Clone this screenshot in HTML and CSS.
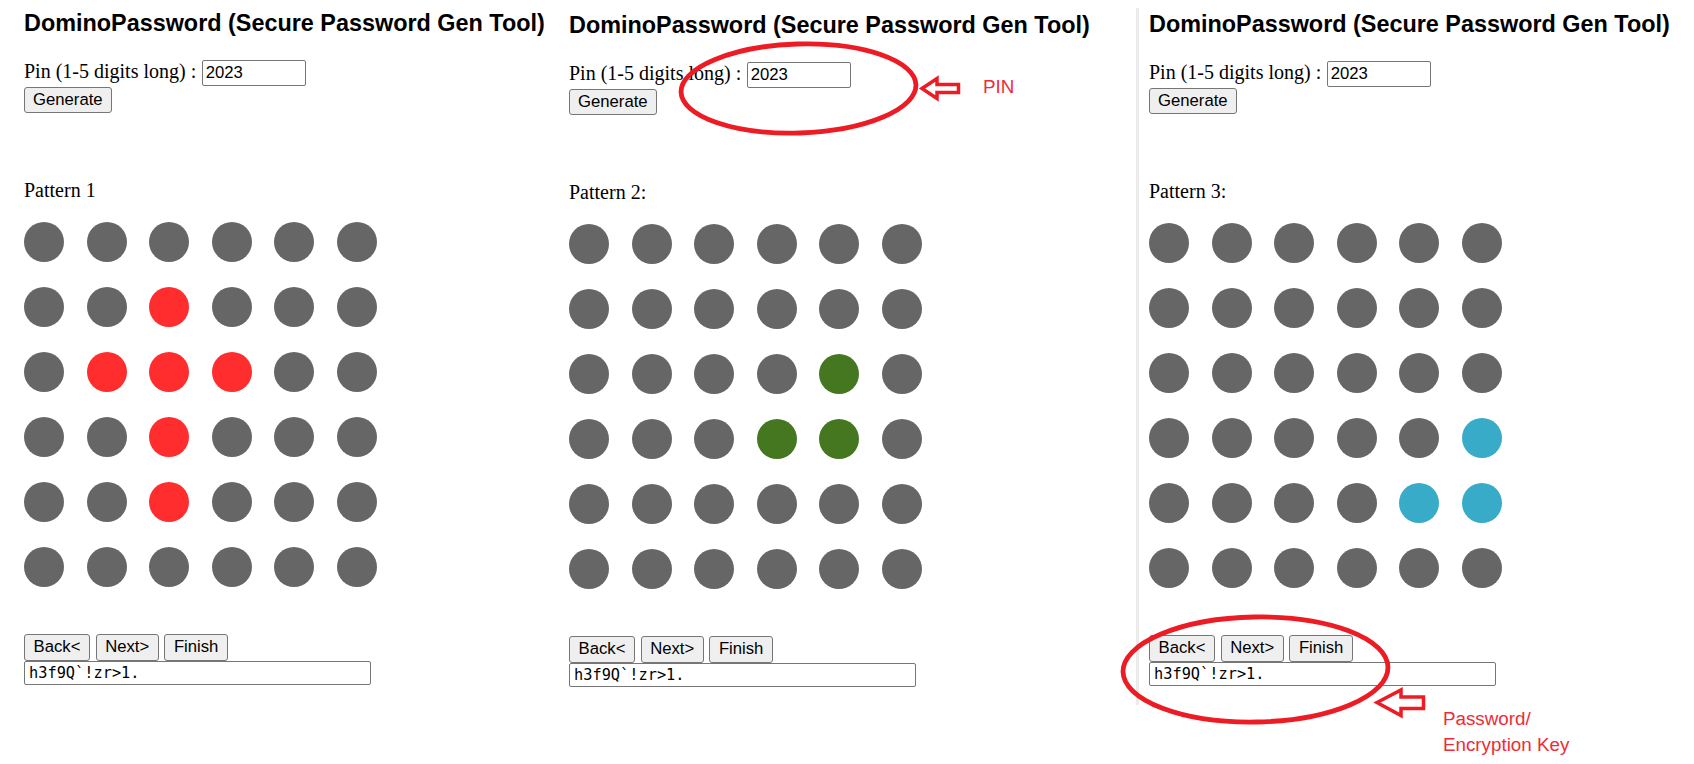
FILE: index.html
```html
<!DOCTYPE html>
<html lang="en">
<head>
<meta charset="utf-8">
<title>DominoPassword</title>
<link rel="stylesheet" href="styles.css">
</head>
<body>
<div class="sheet">
  <section class="panel panel--one">
    <h3 class="title">DominoPassword (Secure Password Gen Tool)</h3>
    <div class="pin-row"><label class="pin-label">Pin (1-5 digits long) :</label><input class="pin-input" type="text" value="2023"></div>
    <button class="btn btn--generate">Generate</button>
    <p class="pattern-label">Pattern 1</p>
    <div class="grid">
      <span class="dot"></span><span class="dot"></span><span class="dot"></span><span class="dot"></span><span class="dot"></span><span class="dot"></span>
      <span class="dot"></span><span class="dot"></span><span class="dot dot--red"></span><span class="dot"></span><span class="dot"></span><span class="dot"></span>
      <span class="dot"></span><span class="dot dot--red"></span><span class="dot dot--red"></span><span class="dot dot--red"></span><span class="dot"></span><span class="dot"></span>
      <span class="dot"></span><span class="dot"></span><span class="dot dot--red"></span><span class="dot"></span><span class="dot"></span><span class="dot"></span>
      <span class="dot"></span><span class="dot"></span><span class="dot dot--red"></span><span class="dot"></span><span class="dot"></span><span class="dot"></span>
      <span class="dot"></span><span class="dot"></span><span class="dot"></span><span class="dot"></span><span class="dot"></span><span class="dot"></span>
    </div>
    <div class="nav"><button class="btn btn--nav">Back&lt;</button><button class="btn btn--nav">Next&gt;</button><button class="btn btn--nav">Finish</button></div>
    <input class="key" type="text" value="h3f9Q`!zr>1.">
  </section>

  <section class="panel panel--two">
    <h3 class="title">DominoPassword (Secure Password Gen Tool)</h3>
    <div class="pin-row"><label class="pin-label">Pin (1-5 digits long) :</label><input class="pin-input" type="text" value="2023"></div>
    <button class="btn btn--generate">Generate</button>
    <p class="pattern-label">Pattern 2:</p>
    <div class="grid">
      <span class="dot"></span><span class="dot"></span><span class="dot"></span><span class="dot"></span><span class="dot"></span><span class="dot"></span>
      <span class="dot"></span><span class="dot"></span><span class="dot"></span><span class="dot"></span><span class="dot"></span><span class="dot"></span>
      <span class="dot"></span><span class="dot"></span><span class="dot"></span><span class="dot"></span><span class="dot dot--green"></span><span class="dot"></span>
      <span class="dot"></span><span class="dot"></span><span class="dot"></span><span class="dot dot--green"></span><span class="dot dot--green"></span><span class="dot"></span>
      <span class="dot"></span><span class="dot"></span><span class="dot"></span><span class="dot"></span><span class="dot"></span><span class="dot"></span>
      <span class="dot"></span><span class="dot"></span><span class="dot"></span><span class="dot"></span><span class="dot"></span><span class="dot"></span>
    </div>
    <div class="nav"><button class="btn btn--nav">Back&lt;</button><button class="btn btn--nav">Next&gt;</button><button class="btn btn--nav">Finish</button></div>
    <input class="key" type="text" value="h3f9Q`!zr>1.">
  </section>

  <section class="panel panel--three">
    <h3 class="title">DominoPassword (Secure Password Gen Tool)</h3>
    <div class="pin-row"><label class="pin-label">Pin (1-5 digits long) :</label><input class="pin-input" type="text" value="2023"></div>
    <button class="btn btn--generate">Generate</button>
    <p class="pattern-label">Pattern 3:</p>
    <div class="grid">
      <span class="dot"></span><span class="dot"></span><span class="dot"></span><span class="dot"></span><span class="dot"></span><span class="dot"></span>
      <span class="dot"></span><span class="dot"></span><span class="dot"></span><span class="dot"></span><span class="dot"></span><span class="dot"></span>
      <span class="dot"></span><span class="dot"></span><span class="dot"></span><span class="dot"></span><span class="dot"></span><span class="dot"></span>
      <span class="dot"></span><span class="dot"></span><span class="dot"></span><span class="dot"></span><span class="dot"></span><span class="dot dot--blue"></span>
      <span class="dot"></span><span class="dot"></span><span class="dot"></span><span class="dot"></span><span class="dot dot--blue"></span><span class="dot dot--blue"></span>
      <span class="dot"></span><span class="dot"></span><span class="dot"></span><span class="dot"></span><span class="dot"></span><span class="dot"></span>
    </div>
    <div class="nav"><button class="btn btn--nav">Back&lt;</button><button class="btn btn--nav">Next&gt;</button><button class="btn btn--nav">Finish</button></div>
    <input class="key" type="text" value="h3f9Q`!zr>1.">
  </section>
</div>

<svg class="marks" viewBox="0 0 1694 764" width="1694" height="764" aria-hidden="true">
  <ellipse cx="798.5" cy="88.5" rx="117.5" ry="44.5" transform="rotate(-1.8 798.5 88.5)" fill="none" stroke="#ed1c24" stroke-width="4.8"/>
  <polygon points="922,88.5 937,78.5 937,84.5 958.5,84.5 958.5,92.5 937,92.5 937,98.5" fill="none" stroke="#ed1c24" stroke-width="3.5" stroke-linejoin="miter"/>
  <ellipse cx="1255.5" cy="669.5" rx="132.5" ry="52.5" transform="rotate(-1 1255.5 669.5)" fill="none" stroke="#ed1c24" stroke-width="4.8"/>
  <polygon points="1377,702.5 1401,690 1401,697 1423.5,697 1423.5,708.5 1401,708.5 1401,715.5" fill="none" stroke="#ed1c24" stroke-width="3.5" stroke-linejoin="miter"/>
</svg>
<div class="note note--pin">PIN</div>
<div class="note note--key">Password/<br>Encryption Key</div>
</body>
</html>
```

FILE: styles.css
```css
html, body {
  margin: 0;
  padding: 0;
  background: #ffffff;
}

body {
  position: relative;
  width: 1694px;
  height: 764px;
  overflow: hidden;
  color: #000;
  font-family: "Liberation Serif", "Times New Roman", serif;
  font-size: 20px;
}

.sheet {
  display: flex;
  align-items: flex-start;
}

.panel {
  display: flex;
  flex-direction: column;
  align-items: flex-start;
  box-sizing: border-box;
}

.panel--one {
  width: 569px;
  padding: 10px 0 0 24px;
}

.panel--two {
  width: 567px;
  padding: 12px 0 0 0;
}

.panel--three {
  flex: 1;
  margin-top: 8px;
  height: 697px;
  padding: 3px 0 0 10px;
  border-left: 3px solid #ebebeb;
}

.title {
  margin: 0;
  font-family: "Liberation Sans", Arial, sans-serif;
  font-weight: bold;
  font-size: 23.4px;
  line-height: 27px;
  white-space: nowrap;
}

.pin-row {
  display: flex;
  align-items: baseline;
  gap: 6px;
  margin-top: 23px;
}

.pin-label {
  font-size: 20px;
  line-height: 23px;
  white-space: nowrap;
}

.pin-input {
  box-sizing: border-box;
  width: 104px;
  height: 26px;
  margin: 0;
  padding: 0 2.5px;
  border: 1px solid #767676;
  border-radius: 2px;
  background: #fff;
  color: #000;
  font-family: "Liberation Sans", Arial, sans-serif;
  font-size: 16.7px;
  outline: none;
}

.btn {
  box-sizing: border-box;
  margin: 0;
  padding: 0 8px;
  background: #efefef;
  border: 1px solid #767676;
  border-radius: 3px;
  color: #000;
  font-family: "Liberation Sans", Arial, sans-serif;
  font-size: 16.7px;
  line-height: 1;
  white-space: nowrap;
}

.btn--generate {
  height: 26px;
  margin-top: 1px;
}

.pattern-label {
  margin: 66px 0 0 0;
  font-size: 20px;
  line-height: 23px;
}

.grid {
  display: grid;
  grid-template-columns: repeat(6, 40px);
  grid-auto-rows: 40px;
  column-gap: 22.6px;
  row-gap: 25px;
  margin-top: 20px;
}

.dot {
  display: block;
  width: 40px;
  height: 40px;
  border-radius: 50%;
  background: #666666;
}

.dot--red {
  background: #ff2d2d;
}

.dot--green {
  background: #447720;
}

.dot--blue {
  background: #38abc9;
}

.nav {
  display: flex;
  gap: 5.5px;
  margin-top: 47px;
}

.btn--nav {
  height: 27px;
  padding: 0 8.6px;
}

.key {
  box-sizing: border-box;
  width: 347px;
  height: 24px;
  margin: 0;
  padding: 0 4px;
  border: 1px solid #767676;
  border-radius: 2px;
  background: #fff;
  color: #000;
  font-family: "DejaVu Sans Mono", "Liberation Mono", monospace;
  font-size: 15.3px;
  outline: none;
}

.marks {
  position: absolute;
  top: 0;
  left: 0;
  pointer-events: none;
}

.note {
  position: absolute;
  color: #ef2b36;
  font-family: "Liberation Sans", Arial, sans-serif;
  font-size: 18.8px;
  white-space: nowrap;
}

.note--pin {
  left: 983px;
  top: 78px;
  line-height: 18px;
}

.note--key {
  left: 1443px;
  top: 706px;
  line-height: 26px;
}
```
